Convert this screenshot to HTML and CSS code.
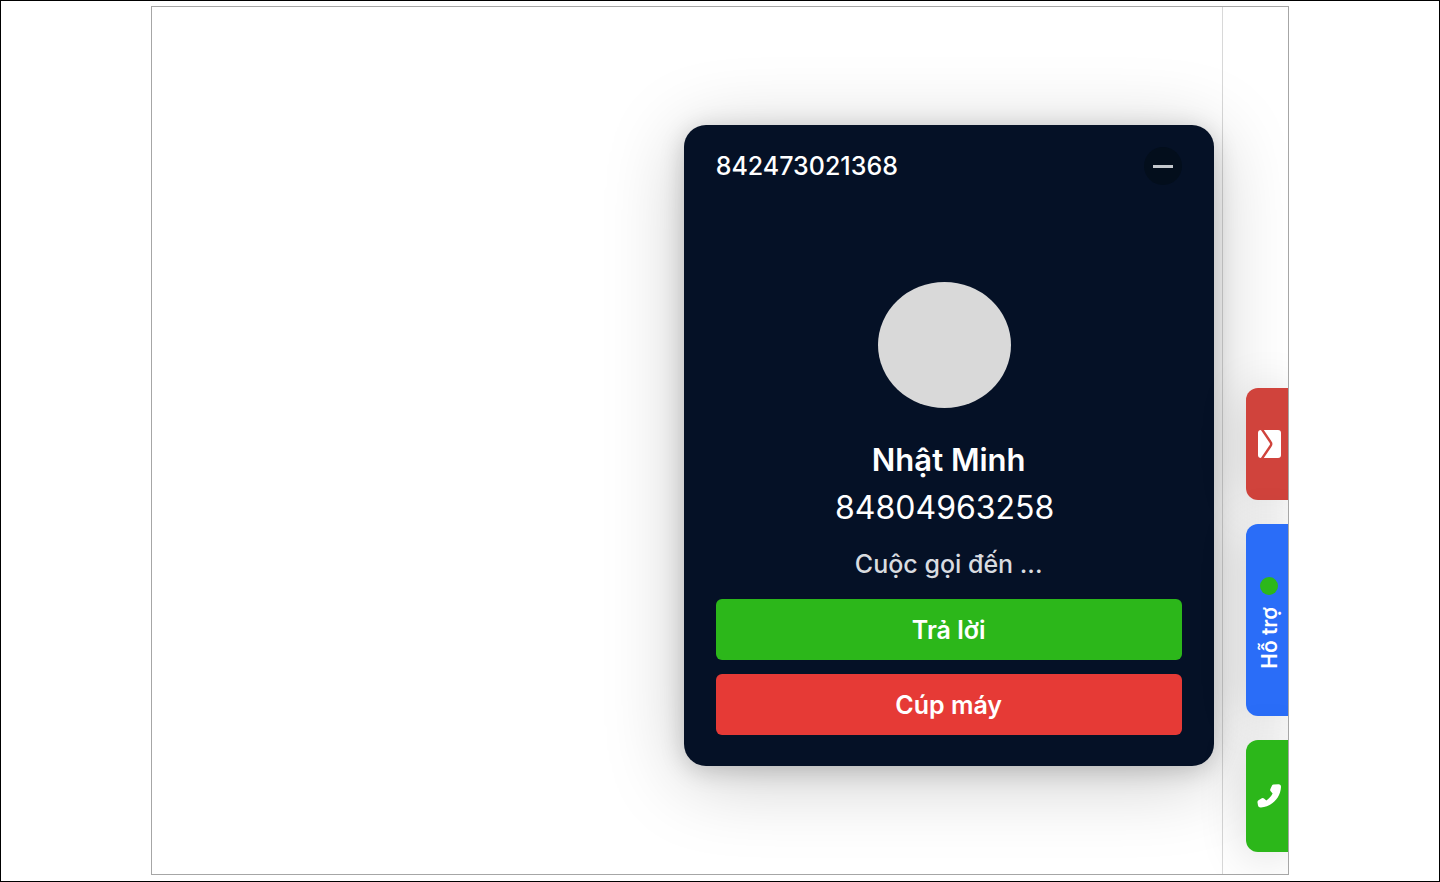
FILE: index.html
```
<!DOCTYPE html>
<html lang="vi">
<head>
  <meta charset="UTF-8">
  <meta name="viewport" content="width=device-width, initial-scale=1">
  <title>Cuộc gọi đến</title>
  <link rel="stylesheet" href="styles.css">
</head>
<body>

<div class="panel">
  <main class="content">
    <section class="call-card">
      <header class="call-header">
        <span class="hotline">842473021368</span>
        <button class="minimize" type="button" aria-label="Thu nhỏ"><span class="dash"></span></button>
      </header>

      <div class="avatar"></div>
      <h1 class="name">Nhật Minh</h1>
      <p class="phone">84804963258</p>
      <p class="status">Cuộc gọi đến ...</p>

      <div class="actions">
        <button class="btn answer" type="button">Trả lời</button>
        <button class="btn hangup" type="button">Cúp máy</button>
      </div>
    </section>
  </main>

  <aside class="rail">
    <button class="tab mail" type="button" aria-label="Email">
      <svg width="23" height="28" viewBox="0 0 23 28">
        <rect width="23" height="28" rx="3" fill="#fff"/>
        <path fill="none" stroke="#d0433c" stroke-width="2.400" d="M3 -2L12.500 12Q14 14 12.500 16L3 30"/>
      </svg>
    </button>
    <button class="tab support" type="button">
      <span class="online"></span>
      <span class="label">Hỗ trợ</span>
    </button>
    <button class="tab call" type="button" aria-label="Gọi điện">
      <svg width="24" height="24" viewBox="0 0 24 24">
        <path fill="#fff" d="M16.500 .5L21.500 .2Q24 .2 24 3C23.500 14 15 22.500 4 23.500Q1.300 23.700 1 21.500L.5 18.500Q.3 17 1.500 16.300L4.800 14.300Q6 13.600 7 14.500L9.300 16.400C12 14.800 14.300 12.300 15.600 9.400L13.700 7.300Q12.800 6.300 13.400 5.100L15 1.600Q15.500 .5 16.500 .5Z"/>
      </svg>
    </button>
  </aside>
</div>

</body>
</html>
```
FILE: styles.css
```
* { box-sizing: border-box; margin: 0; padding: 0; }
body {
  display: flex;
  justify-content: center;
  min-height: 100vh;
  padding: 5px 5px 6px;
  border: 1px solid #000;
  background: #fff;
  font-family: Inter, "Noto Sans", sans-serif;
}
button { border: none; font-family: inherit; cursor: pointer; }

.panel {
  display: flex;
  width: calc(80% - 5px);
  border: 1px solid #a6a6a6;
  overflow: hidden;
}
.content {
  flex: 1;
  display: flex;
  justify-content: flex-end;
  align-items: flex-start;
  padding: 118px 8px 0 0;
  border-right: 1px solid #d8d8d8;
}

/* Thẻ cuộc gọi */
.call-card {
  display: flex;
  flex-direction: column;
  align-items: center;
  width: 100%;
  max-width: 530px;
  padding: 22px 32px 31px;
  border-radius: 22px;
  background: #051126;
  color: #fff;
  box-shadow: 0 4px 24px rgba(0,0,0,0.18), 0 12px 80px rgba(0,0,0,0.22);
}
.call-header {
  display: flex;
  justify-content: space-between;
  align-items: center;
  width: 100%;
}
.hotline { font-size: 25px; font-weight: 500; }
.minimize {
  display: flex;
  justify-content: center;
  align-items: center;
  width: 38px;
  height: 38px;
  border-radius: 50%;
  background: #030e1c;
}
.dash { width: 20px; height: 3px; background: #c3c7cc; }
.avatar {
  width: 133px;
  height: 126px;
  margin-top: 97px;
  border-radius: 50%;
  background: #d9d9d9;
}
.avatar, .phone { margin-right: 8px; }
.name { margin-top: 32px; font-size: 31px; font-weight: 600; line-height: 40px; }
.phone { margin-top: 8px; font-size: 32px; line-height: 40px; }
.status {
  margin-top: 16px;
  font-size: 25px;
  font-weight: 500;
  line-height: 40px;
  color: #d9dce0;
}
.actions {
  display: flex;
  flex-direction: column;
  gap: 14px;
  width: 100%;
  margin-top: 15px;
}
.btn {
  height: 61px;
  border-radius: 6px;
  color: #fff;
  font-size: 25px;
  font-weight: 600;
}
.answer { background: #2cb71a; }
.hangup { background: #e63a36; }

/* Thanh tab bên phải */
.rail {
  display: flex;
  flex-direction: column;
  justify-content: flex-end;
  gap: 24px;
  width: 65px;
  padding: 0 0 22px 23px;
}
.tab {
  display: flex;
  flex-direction: column;
  justify-content: center;
  align-items: center;
  gap: 12px;
  height: 112px;
  padding-left: 5px;
  border-radius: 12px 0 0 12px;
  color: #fff;
  box-shadow: 0 4px 48px rgba(0,0,0,0.16);
}
.mail { background: #d0433c; }
.support { height: 192px; padding-top: 6px; background: #2a6df8; }
.call { background: #2cb71a; }
.online { width: 18px; height: 18px; border-radius: 50%; background: #2cb71a; }
.label {
  writing-mode: vertical-rl;
  transform: rotate(180deg);
  font-size: 21px;
  font-weight: 600;
}
```
